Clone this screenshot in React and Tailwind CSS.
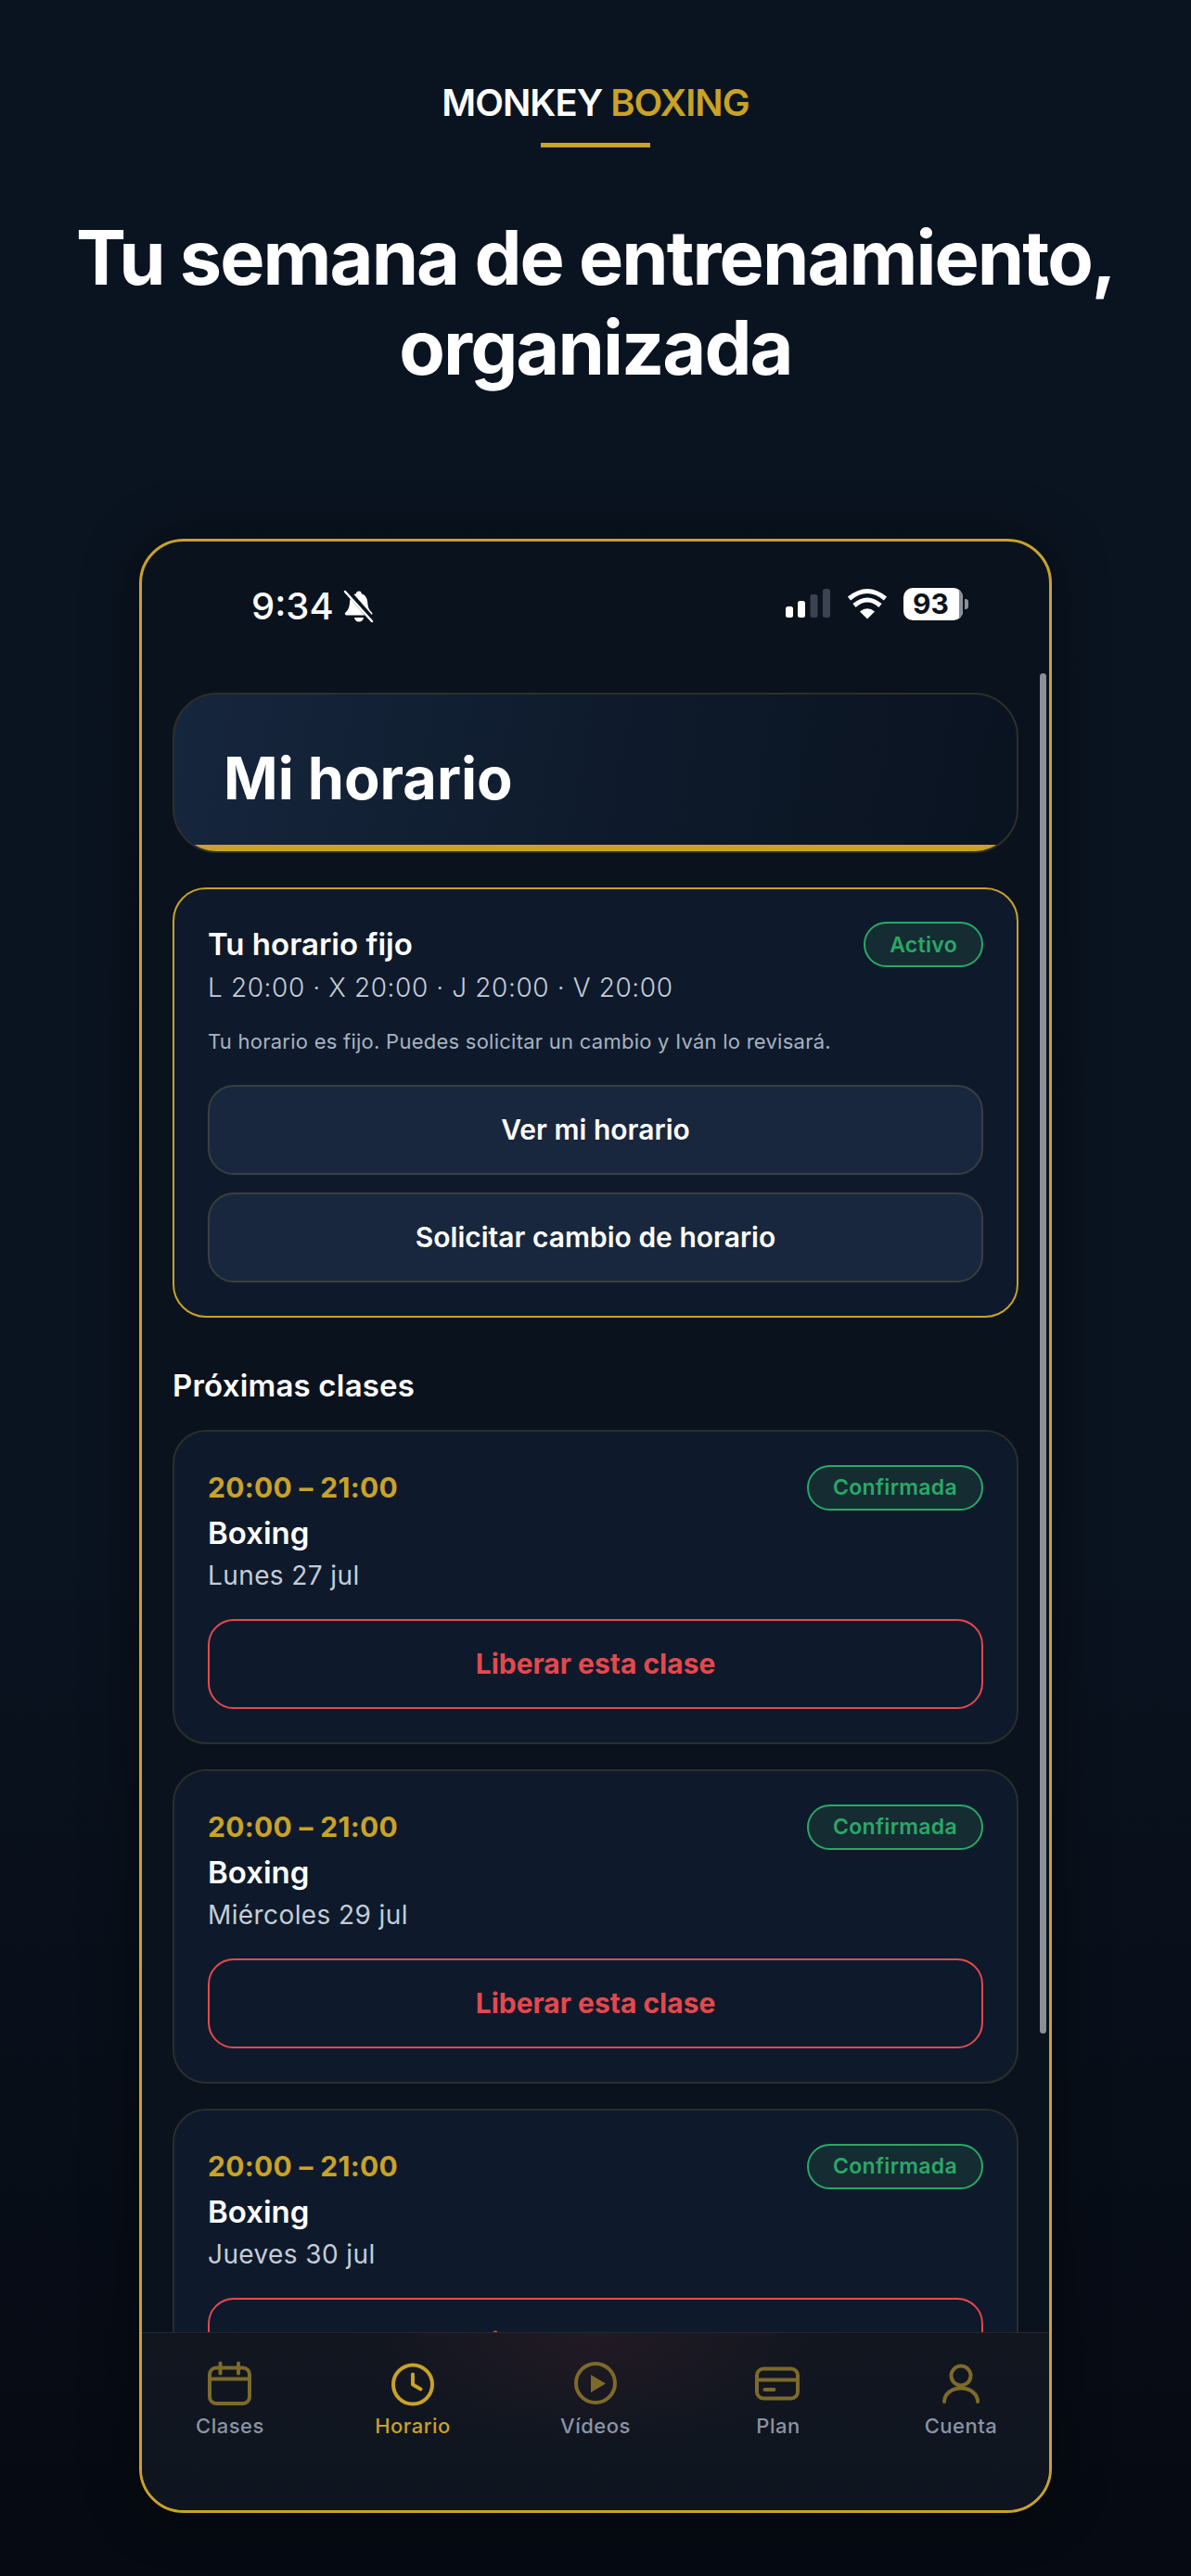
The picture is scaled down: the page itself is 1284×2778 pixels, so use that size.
const gold = "#c9a227";

function Bell() {
  return (
    <svg width="34" height="36" viewBox="0 0 34 36" className="ml-[10px]">
      <path d="M17 1.5c-1.8 0-3 1.2-3.2 2.8-4.4 1.2-6.6 5-6.8 9.7-.2 4.4-1.6 8-4.6 10.6-1.2 1.100-.6 2.900 1 2.900h26.500c1.600 0 2.200-1.800 1-2.900-3-2.600-4.400-6.200-4.600-10.600-.2-4.700-2.400-8.500-6.800-9.700C20 2.700 18.800 1.500 17 1.500z" fill="#fff" />
      <path d="M12 30h10c-.2 2.600-2.300 4.500-5 4.500s-4.800-1.900-5-4.500z" fill="#fff" />
      <path d="M4 1l29 33" stroke="#0a121e" strokeWidth="6" />
      <path d="M2 2l29 32" stroke="#fff" strokeWidth="2.500" strokeLinecap="round" />
    </svg>
  );
}

function Signal() {
  return (
    <svg width="50" height="34" viewBox="0 0 50 34">
      <rect x="1" y="20" width="8" height="12" rx="2.500" fill="#fff" />
      <rect x="14" y="14" width="8" height="18" rx="2.500" fill="#fff" />
      <rect x="27.500" y="7" width="8" height="25" rx="2.500" fill="#3c4350" />
      <rect x="41" y="1" width="8" height="31" rx="2.500" fill="#3c4350" />
    </svg>
  );
}

function Wifi() {
  return (
    <svg width="46" height="36" viewBox="0 0 46 36">
      <path d="M23 34.500 L15 26.500 Q23 20 31 26.500 Z" fill="#fff" />
      <path d="M9 20 Q23 8 37 20" stroke="#fff" strokeWidth="5" fill="none" />
      <path d="M3.500 12.500 Q23 -3.500 42.500 12.500" stroke="#fff" strokeWidth="5" fill="none" />
    </svg>
  );
}

function Battery() {
  return (
    <div className="flex items-center">
      <div className="relative flex h-[35px] w-[64px] items-center justify-center overflow-hidden rounded-[10px] bg-white pr-[5px]">
        <span className="text-[30px] leading-none font-bold text-[#0a121e]">93</span>
        <div className="absolute top-0 right-0 bottom-0 w-[4px] bg-[#8a8f98]" />
      </div>
      <div className="ml-[2px] h-[11px] w-[4px] rounded-r-[3px] bg-[#8a8f98]" />
    </div>
  );
}

const stroke = { fill: "none", strokeWidth: 4, strokeLinecap: "round", strokeLinejoin: "round" };

function CalendarIcon({ c }) {
  return (
    <svg width="50" height="50" viewBox="0 0 50 50" style={{ ...stroke, stroke: c }}>
      <rect x="3" y="7.500" width="43" height="38.500" rx="7" />
      <path d="M3 19.500h43" />
      <path d="M14.500 2.500v11M34 2.500v11" />
    </svg>
  );
}
function ClockIcon({ c }) {
  return (
    <svg width="50" height="50" viewBox="0 0 50 50" style={{ ...stroke, stroke: c }}>
      <circle cx="25" cy="25.500" r="21" />
      <path d="M25 14.500v11l8.500 5" />
    </svg>
  );
}
function PlayIcon({ c }) {
  return (
    <svg width="50" height="50" viewBox="0 0 50 50" style={{ ...stroke, stroke: c }}>
      <circle cx="25" cy="24" r="21" />
      <path d="M20 15v19l16-9.500z" fill={c} stroke="none" />
    </svg>
  );
}
function CardIcon({ c }) {
  return (
    <svg width="50" height="50" viewBox="0 0 50 50" style={{ ...stroke, stroke: c }}>
      <rect x="2" y="8.500" width="44" height="32" rx="7" />
      <path d="M2 20.500h44" />
      <path d="M10.500 31h10" />
    </svg>
  );
}
function UserIcon({ c }) {
  return (
    <svg width="50" height="50" viewBox="0 0 50 50" style={{ ...stroke, stroke: c }}>
      <circle cx="25" cy="16" r="10.500" />
      <path d="M7 44c0-8.500 8-14.500 18-14.500s18 6 18 14.500" />
    </svg>
  );
}

function Pill({ children }) {
  return (
    <span className="flex h-[49px] items-center rounded-full border-2 border-[#2aa866] bg-[#152c33] px-[26px] text-[23px] font-semibold tracking-[0.3px] text-[#2aa866]">
      {children}
    </span>
  );
}

function GhostButton({ children }) {
  return (
    <div className="flex h-[97px] items-center justify-center rounded-[28px] border-2 border-[#393e40] bg-[#18273d] text-[30px] font-semibold text-white">
      {children}
    </div>
  );
}

function ClassCard({ day }) {
  return (
    <div className="rounded-[36px] border-2 border-[#2b2e2b] bg-[#0e1a2b] px-[36px] pt-[36px] pb-[36px]">
      <div className="flex items-center justify-between">
        <span className="text-[30px] font-bold tracking-[0.3px] text-[#c9a227]">20:00 – 21:00</span>
        <Pill>Confirmada</Pill>
      </div>
      <div className="mt-[4px] text-[33px] leading-[40px] font-semibold text-white">Boxing</div>
      <div className="mt-[6px] text-[28px] leading-[40px] tracking-[0.4px] text-[#c5ccd8]">{day}</div>
      <div className="mt-[27px] flex h-[97px] items-center justify-center rounded-[28px] border-2 border-[#e5484d] text-[30px] font-bold text-[#e5484d]">
        Liberar esta clase
      </div>
    </div>
  );
}

function Tab({ icon: Icon, label, active }) {
  const c = active ? gold : "#7d6a2b";
  return (
    <div className="flex flex-col items-center">
      <Icon c={c} />
      <span className={`mt-[5px] text-[22px] leading-[30px] font-medium tracking-[0.5px] ${active ? "text-[#c9a227]" : "text-[#8a94a6]"}`}>
        {label}
      </span>
    </div>
  );
}

export default function App() {
  return (
    <div className="flex min-h-[2778px] flex-col items-center bg-[linear-gradient(180deg,#0a1420_0%,#0a1320_60%,#060a12_100%)] pt-[88px] text-white [font-family:Inter,sans-serif]">
      <div className="text-[40px] leading-[46px] font-semibold tracking-[-1px]">
        MONKEY <span className="text-[#c9a227]">BOXING</span>
      </div>
      <div className="mt-[20px] h-[5px] w-[118px] bg-[#c9a227]" />
      <h1 className="mt-[71px] text-center text-[81px] leading-[97px] font-bold tracking-[-1.95px]">
        Tu semana de entrenamiento,
        <br />
        organizada
      </h1>
      <div className="relative mt-[157px] w-[984px] overflow-hidden rounded-[48px] border-[3px] border-[#c9a227] bg-[#0a121e] shadow-[0_0_60px_rgba(0,0,0,0.45)]">
        <div className="flex h-[142px] items-start justify-between pt-[46px] pr-[87px] pl-[118px]">
          <div className="flex items-center">
            <span className="text-[40px] leading-[48px] font-medium">9:34</span>
            <Bell />
          </div>
          <div className="flex items-center gap-[16px] pt-[3px]">
            <Signal />
            <Wifi />
            <Battery />
          </div>
        </div>

        <div className="h-[1789px] overflow-hidden px-[33px] pt-[21px]">
          <div className="relative flex h-[173px] items-center overflow-hidden rounded-[48px] border-2 border-[#2e2f2a] bg-[linear-gradient(100deg,#16263d_0%,#0e1a2b_55%,#0a1320_100%)] pl-[53px]">
            <span className="mt-[12px] text-[63px] leading-none font-bold">Mi horario</span>
            <div className="absolute right-0 bottom-0 left-0 h-[7px] bg-[#c9a227]" />
          </div>

          <div className="mt-[37px] rounded-[36px] border-2 border-[#c9a227] bg-[#0e1a2b] px-[36px] pt-[35px] pb-[36px]">
            <div className="flex items-center justify-between">
              <span className="text-[33px] font-semibold">Tu horario fijo</span>
              <Pill>Activo</Pill>
            </div>
            <div className="mt-px text-[28px] leading-[40px] font-light tracking-[0.6px] text-[#c5ccd8]">
              L 20:00 · X 20:00 · J 20:00 · V 20:00
            </div>
            <div className="mt-[22px] text-[22px] leading-[32px] tracking-[0.25px] text-[#a9b2c0]">
              Tu horario es fijo. Puedes solicitar un cambio y Iván lo revisará.
            </div>
            <div className="mt-[31px] flex flex-col gap-[19px]">
              <GhostButton>Ver mi horario</GhostButton>
              <GhostButton>Solicitar cambio de horario</GhostButton>
            </div>
          </div>

          <div className="mt-[53px] mb-[28px] text-[33px] leading-[40px] font-semibold tracking-[0.2px]">Próximas clases</div>
          <div className="flex flex-col gap-[27px]">
            <ClassCard day="Lunes 27 jul" />
            <ClassCard day="Miércoles 29 jul" />
            <ClassCard day="Jueves 30 jul" />
          </div>
        </div>

        <div className="grid h-[192px] grid-cols-[repeat(5,197px)] justify-center border-t border-t-[#26282a] bg-[radial-gradient(ellipse_260px_120px_at_50%_0%,#221a24_0%,transparent_100%),linear-gradient(180deg,#11161f_0%,#0f1520_100%)] pt-[30px]">
          <Tab icon={CalendarIcon} label="Clases" />
          <Tab icon={ClockIcon} label="Horario" active />
          <Tab icon={PlayIcon} label="Vídeos" />
          <Tab icon={CardIcon} label="Plan" />
          <Tab icon={UserIcon} label="Cuenta" />
        </div>

        <div className="absolute top-[142px] right-[3px] h-[1467px] w-[7px] rounded-full bg-[#8a8f98]" />
      </div>
    </div>
  );
}
